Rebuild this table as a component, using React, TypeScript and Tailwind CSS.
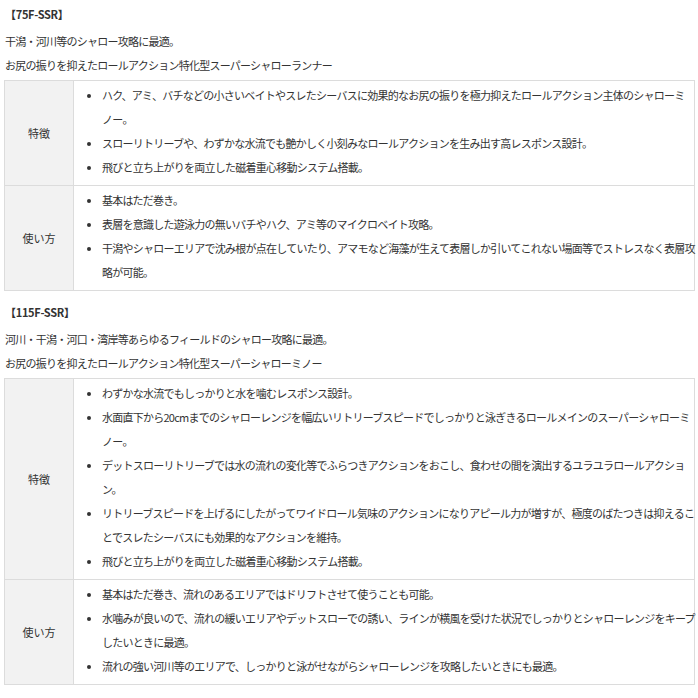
import React from 'react';

interface Row {
  label: string;
  items: string[][];
}

interface Section {
  title: string;
  intro: string[];
  rows: Row[];
}

const SECTIONS: Section[] = [
  {
    title: '【75F-SSR】',
    intro: [
      '干潟・河川等のシャロー攻略に最適。',
      'お尻の振りを抑えたロールアクション特化型スーパーシャローランナー',
    ],
    rows: [
      {
        label: '特徴',
        items: [
          ['ハク、アミ、バチなどの小さいベイトやスレたシーバスに効果的なお尻の振りを極力抑えたロールアクション主体のシャローミ', 'ノー。'],
          ['スローリトリーブや、わずかな水流でも艶かしく小刻みなロールアクションを生み出す高レスポンス設計。'],
          ['飛びと立ち上がりを両立した磁着重心移動システム搭載。'],
        ],
      },
      {
        label: '使い方',
        items: [
          ['基本はただ巻き。'],
          ['表層を意識した遊泳力の無いバチやハク、アミ等のマイクロベイト攻略。'],
          ['干潟やシャローエリアで沈み根が点在していたり、アマモなど海藻が生えて表層しか引いてこれない場面等でストレスなく表層攻', '略が可能。'],
        ],
      },
    ],
  },
  {
    title: '【115F-SSR】',
    intro: [
      '河川・干潟・河口・湾岸等あらゆるフィールドのシャロー攻略に最適。',
      'お尻の振りを抑えたロールアクション特化型スーパーシャローミノー',
    ],
    rows: [
      {
        label: '特徴',
        items: [
          ['わずかな水流でもしっかりと水を噛むレスポンス設計。'],
          ['水面直下から20cmまでのシャローレンジを幅広いリトリーブスピードでしっかりと泳ぎきるロールメインのスーパーシャローミ', 'ノー。'],
          ['デットスローリトリーブでは水の流れの変化等でふらつきアクションをおこし、食わせの間を演出するユラユラロールアクショ', 'ン。'],
          ['リトリーブスピードを上げるにしたがってワイドロール気味のアクションになりアピール力が増すが、極度のばたつきは抑えるこ', 'とでスレたシーバスにも効果的なアクションを維持。'],
          ['飛びと立ち上がりを両立した磁着重心移動システム搭載。'],
        ],
      },
      {
        label: '使い方',
        items: [
          ['基本はただ巻き、流れのあるエリアではドリフトさせて使うことも可能。'],
          ['水噛みが良いので、流れの緩いエリアやデットスローでの誘い、ラインが横風を受けた状況でしっかりとシャローレンジをキープ', 'したいときに最適。'],
          ['流れの強い河川等のエリアで、しっかりと泳がせながらシャローレンジを攻略したいときにも最適。'],
        ],
      },
    ],
  },
];

function SpecTable({ rows }: { rows: Row[] }) {
  return (
    <div className="mt-[3px] w-[691px] border border-[#dcdcdc]">
      {rows.map((row, i) => (
        <div key={row.label} className={`flex ${i > 0 ? 'border-t border-[#dcdcdc]' : ''}`}>
          <div className="w-[69px] shrink-0 flex items-center justify-center bg-[#f2f2f2] border-r border-[#dcdcdc] tracking-normal">
            {row.label}
          </div>
          <ul className="flex-1 list-disc pl-[28px] pt-[2px] pb-[6px]">
            {row.items.map((lines, j) => (
              <li key={j} className="whitespace-nowrap marker:text-[10px]">
                {lines.map((line, k) => (
                  <React.Fragment key={k}>
                    {k > 0 && <br />}
                    {line}
                  </React.Fragment>
                ))}
              </li>
            ))}
          </ul>
        </div>
      ))}
    </div>
  );
}

export default function App() {
  return (
    <div className="w-[698px] h-[698px] bg-white pl-[4px] pt-[2px] text-[11px] leading-[24px] tracking-[-0.75px] text-[#333] font-['Noto_Sans_CJK_JP',sans-serif]">
      {SECTIONS.map((s, i) => (
        <section key={s.title} className={i > 0 ? 'mt-[9px]' : ''}>
          <h3 className="font-bold pl-[1px] tracking-[-0.3px]">{s.title}</h3>
          <div className="mt-[3px] pl-[1px]">
            {s.intro.map(t => <p key={t}>{t}</p>)}
          </div>
          <SpecTable rows={s.rows} />
        </section>
      ))}
    </div>
  );
}
